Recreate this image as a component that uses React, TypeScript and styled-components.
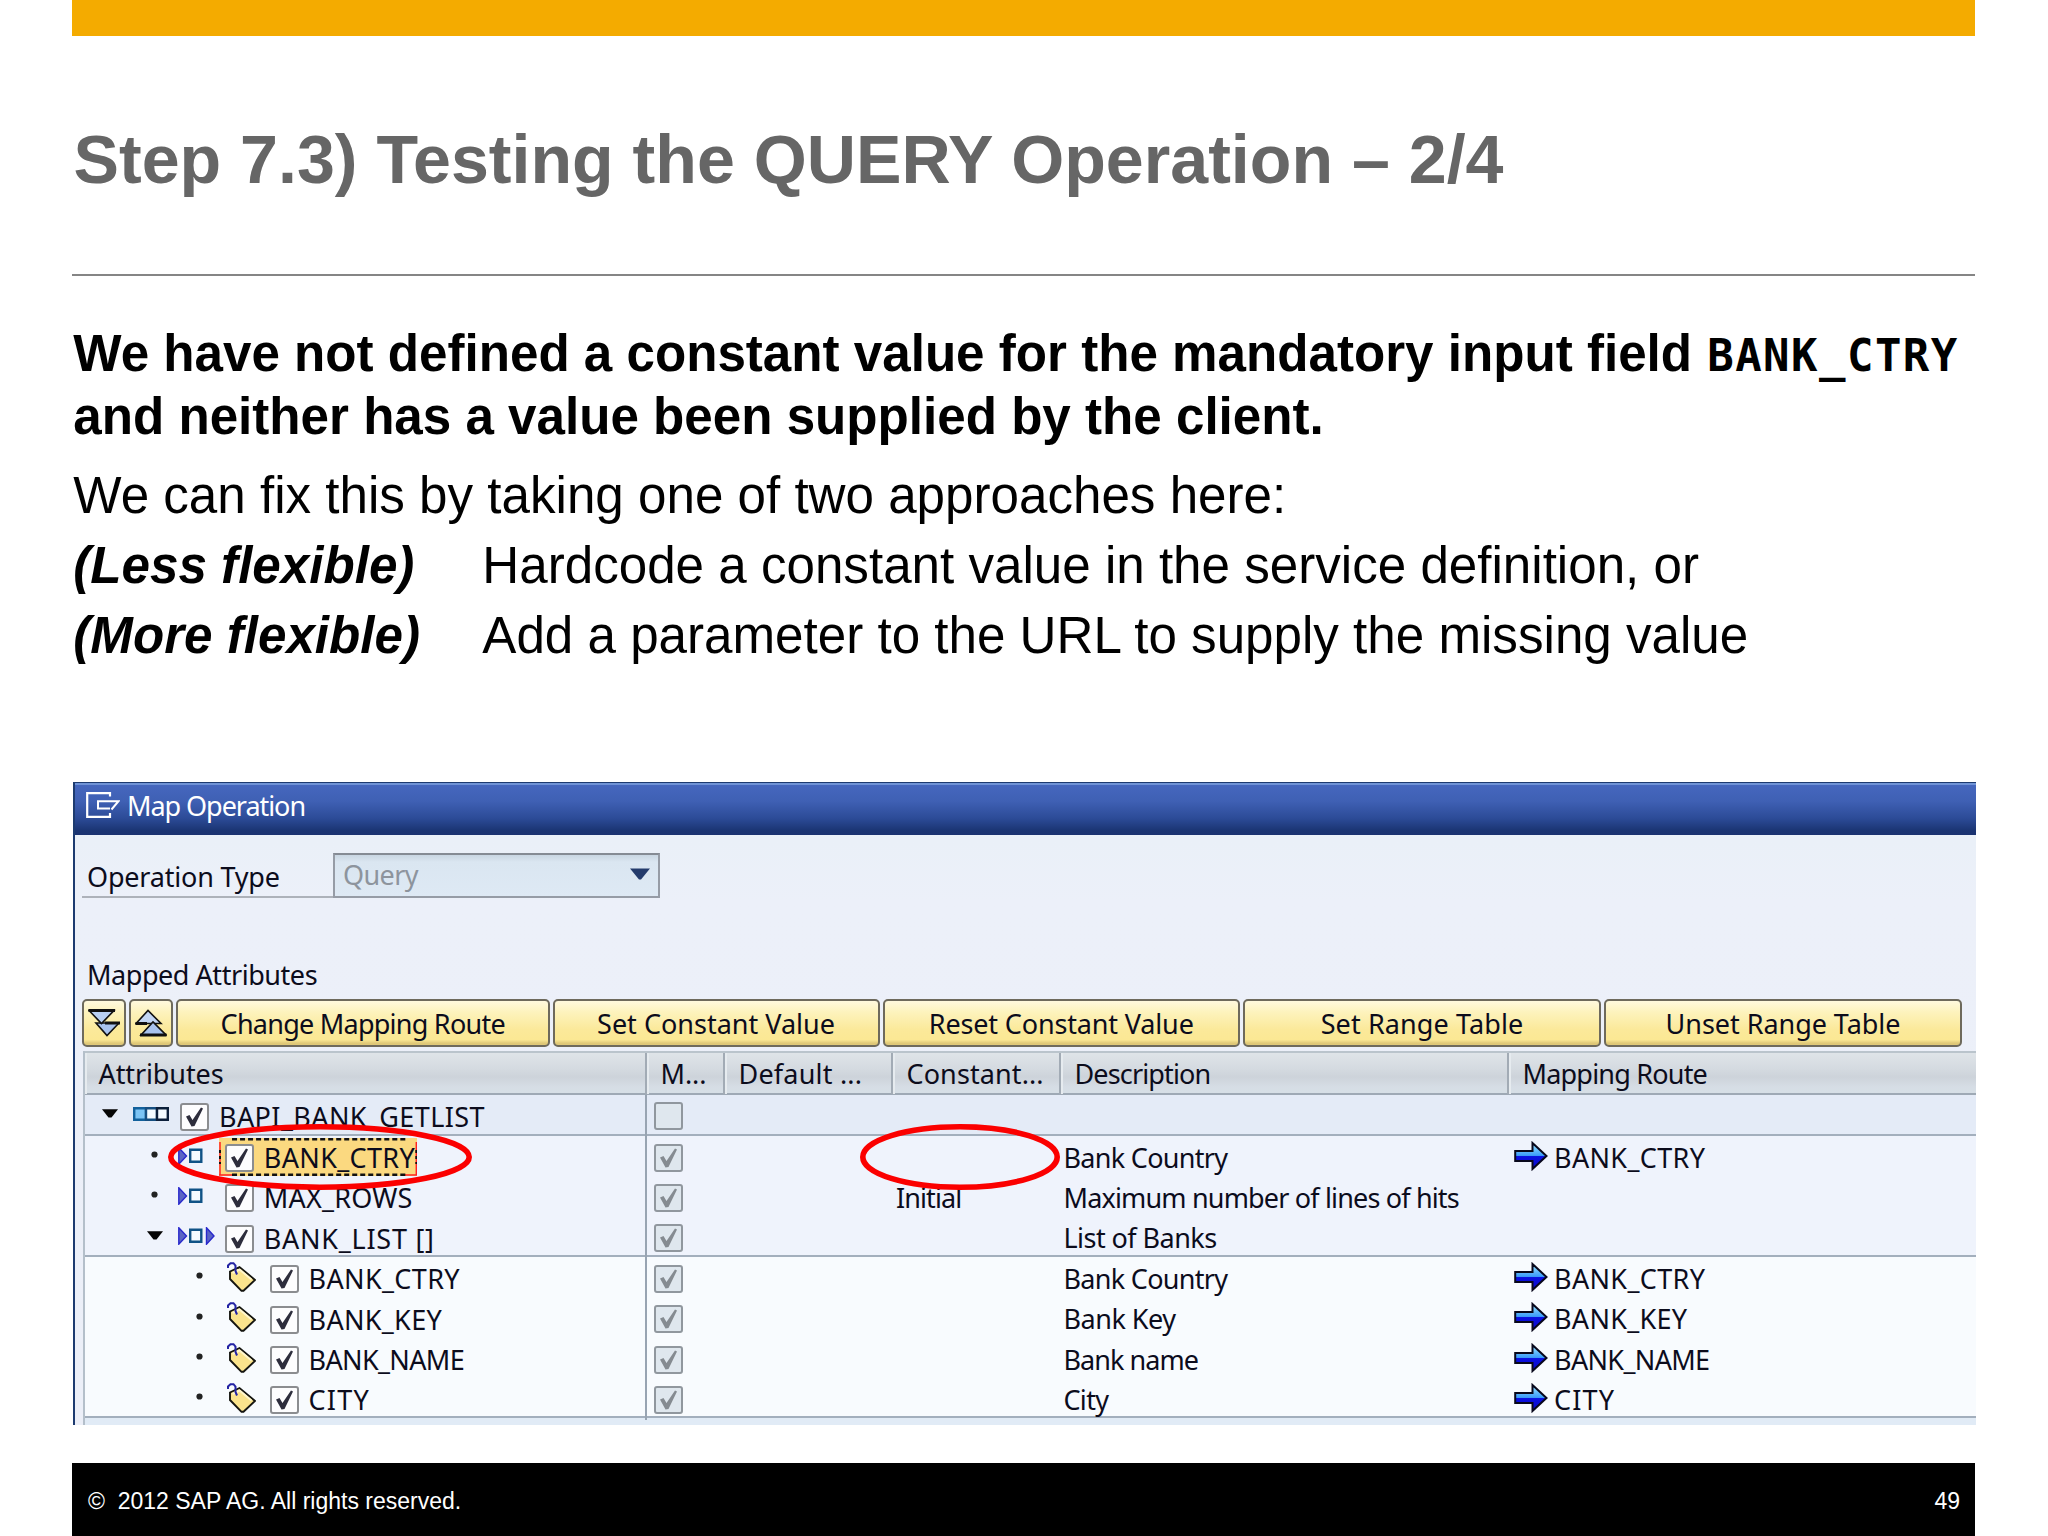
import React from "react";
import styled, { createGlobalStyle, css } from "styled-components";

const Global = createGlobalStyle`
  body { margin: 0; background: #fff; }
  * { box-sizing: border-box; }
`;

const Slide = styled.div`
  width: 2048px;
  height: 1536px;
  padding: 0 73px 0 72px;
  display: flex;
  flex-direction: column;
  overflow: hidden;
  background: #fff;
  color: #000;
  font-family: "Liberation Sans", Arial, sans-serif;
`;

const TopBar = styled.div`
  flex: none;
  height: 36px;
  background: #f4ab00;
`;

const Title = styled.h1`
  flex: none;
  margin: 0;
  height: 240px;
  padding: 83px 0 0 1.5px;
  border-bottom: 2px solid #858585;
  font-size: 68.15px;
  line-height: 80px;
  font-weight: bold;
  color: #666;
  white-space: nowrap;
`;

const Body = styled.div`
  flex: none;
  height: 505.6px;
  padding: 47px 0 0 1.3px;
  font-size: 51.15px;
  white-space: nowrap;
`;

const Lead = styled.p`
  margin: 0 0 12px;
  font-weight: bold;
  line-height: 62.8px;
`;

const Code = styled.code`
  margin-left: 1px;
  font: bold 44px/1 "DejaVu Sans Mono", monospace;
  letter-spacing: 1.45px;
`;

const Line = styled.p`
  margin: 0;
  display: grid;
  grid-template-columns: 409px auto;
  line-height: 70px;
`;

const Full = styled.span`
  grid-column: 1 / -1;
`;

const Term = styled.em`
  font-weight: bold;
`;

const Panel = styled.section`
  position: relative;
  flex: none;
  width: 1903px;
  height: 643px;
  margin-left: 1px;
  border-left: 2px solid #1d3b70;
  display: flex;
  flex-direction: column;
  overflow: hidden;
  background: linear-gradient(#e8f0f7, #ecf0f9 120px, #eceff8);
  font-family: "Noto Sans", "Open Sans", sans-serif;
  font-size: 27px;
  line-height: 40px;
  color: #0c0c1c;
`;

const Text = styled.span<{ $ls?: number }>`
  padding-top: 2px;
  white-space: pre;
  letter-spacing: ${(p) => p.$ls ?? 0}px;
`;

const Caption = styled.header`
  flex: none;
  height: 53px;
  padding: 0 0 8px 11px;
  display: flex;
  align-items: center;
  gap: 7px;
  color: #fff;
  border-top: 1px solid #1d3b70;
  box-shadow: inset 0 2px 0 #6f93d6;
  background: linear-gradient(#4668bf, #3f60b4 35%, #2c4b97 68%, #1a3472 92%, #1a3270);
`;

const Form = styled.div`
  flex: none;
  height: 63.5px;
  padding: 18.5px 0 0 7px;
  display: flex;
`;

const FieldLabel = styled.div`
  width: 251px;
  height: 45px;
  padding: 3.5px 0 0 5px;
  border-bottom: 2px solid #adb2ba;
`;

const Select = styled.div`
  width: 327px;
  height: 45px;
  padding: 0 8px 4px;
  display: flex;
  justify-content: space-between;
  align-items: center;
  border: 2px solid #969ca6;
  border-top-color: #858b94;
  background: linear-gradient(#c9d6e2, #dae6f1 7px, #dee9f4);
  color: #8d949d;
`;

const SectionLabel = styled.div`
  flex: none;
  height: 101px;
  padding: 57px 0 0 12px;
`;

const Toolbar = styled.div`
  flex: none;
  height: 52px;
  padding: 0 0 0 7px;
  display: flex;
  gap: 3px;
`;

const Button = styled.button<{ $w: number }>`
  flex: none;
  width: ${(p) => p.$w}px;
  height: 48px;
  padding: 0 0 1px;
  display: flex;
  justify-content: center;
  align-items: center;
  border: 2px solid #6e6a5c;
  border-radius: 5px;
  background: linear-gradient(#fff9de, #fdf3bd 25%, #fbe99a 65%, #fbe894 88%, #dfc878 96%);
  font: inherit;
  color: inherit;
`;

const columns = "562px 78px 168px 168px 448px 1fr";

const Table = styled.div`
  flex: 1;
  margin-left: 8px;
  display: flex;
  flex-direction: column;
  border-left: 2px solid #b4bfca;
  background: #e1ebf6;
`;

const Head = styled.div`
  flex: none;
  height: 44.1px;
  display: grid;
  grid-template-columns: ${columns};
  border-top: 2px solid #bac4cc;
  border-bottom: 2px solid #9ea9b5;
  background: linear-gradient(#dfe4e8, #d4dae0 40%, #cdd3da 60%, #d6dde5 85%, #d6dfe6);
`;

const HeadCell = styled.div<{ $last?: boolean }>`
  padding: 0 0 0 13.5px;
  line-height: 41px;
  white-space: nowrap;
  border-right: ${(p) => (p.$last ? "0" : "2px solid #a2abb5")};
  box-shadow: inset 2px 0 0 #e6ebef;
`;

const tones = { root: "#e4ebf7", mid: "#eff3fc", leaf: "#f8fbfe" };

const Row = styled.div<{ $tone: keyof typeof tones; $line?: boolean }>`
  flex: none;
  height: 40.4px;
  display: grid;
  grid-template-columns: ${columns};
  background: ${(p) => tones[p.$tone]};
  ${(p) => p.$line && css`box-shadow: inset 0 -2px 0 #a3afbd;`}
`;

const Cell = styled.div<{ $pad?: number }>`
  min-width: 0;
  padding-left: ${(p) => p.$pad ?? 3}px;
  display: flex;
  align-items: center;
`;

const TreeCell = styled(Cell)<{ $level: number }>`
  padding-left: ${(p) => 12 + p.$level * 44.8}px;
  border-right: 2px solid #98a4b2;
`;

const Marker = styled.span`
  flex: none;
  width: 26px;
  display: flex;
  justify-content: center;
  padding-bottom: 4px;
`;

const KindIcon = styled.span<{ $shift?: number }>`
  flex: none;
  width: 51px;
  padding: 0 0 2px ${(p) => 10 + (p.$shift ?? 0)}px;
  display: flex;
`;

const Item = styled.span<{ $on?: boolean }>`
  position: relative;
  height: 38px;
  margin-top: 1px;
  padding: 0 2px 0 6px;
  display: flex;
  align-items: center;
  gap: 10px;
  background: ${(p) => (p.$on ? "#fbd980" : "none")};
`;

const Frame = styled.svg`
  position: absolute;
  inset: 0;
  width: 100%;
  height: 100%;
`;

const Box = styled.span<{ $off?: boolean }>`
  flex: none;
  width: 29px;
  height: 28px;
  margin-top: 2px;
  display: flex;
  align-items: center;
  justify-content: center;
  border: 2px solid ${(p) => (p.$off ? "#90979e" : "#8b8d90")};
  border-radius: 3px;
  background: ${(p) => (p.$off ? "#dfe7ee" : "#fdfdfe")};
`;

const Ring = styled.svg<{ $x: number; $w: number }>`
  position: absolute;
  left: ${(p) => p.$x}px;
  top: 342px;
  width: ${(p) => p.$w}px;
  height: 66px;
`;

const Footer = styled.footer`
  flex: none;
  height: 73px;
  margin-top: 38.5px;
  padding: 0 15px 0 16px;
  display: flex;
  justify-content: space-between;
  line-height: 76px;
  background: #000;
  color: #fff;
  font-size: 23px;
  white-space: pre;
`;

const RouteLink = styled.span`
  display: flex;
  align-items: center;
  gap: 6px;
  svg { margin-bottom: 2px; }
`;

const Check = ({ off }: { off?: boolean }) => (
  <svg width="19" height="22" viewBox="0 0 19 22">
    <path d="M1 10.5 L4.5 9 L7.5 14 L16 1.5 L18 2.5 L9.5 20 L6.5 20.5 Z" fill={off ? "#858b91" : "#2d2d3c"} />
  </svg>
);

const Checkbox = ({ off, empty }: { off?: boolean; empty?: boolean }) => (
  <Box $off={off}>{!empty && <Check off={off} />}</Box>
);

const WindowIcon = () => (
  <svg width="34" height="26" viewBox="0 0 34 26" fill="none" stroke="#fff">
    <path d="M24 4.5V1.2H1.2V24.8H24V21" strokeWidth="2.2" />
    <path d="M24 16.500H12V9.200H32.500L25.500 17.500" strokeWidth="2" />
  </svg>
);

const ExpandIcon = () => (
  <svg width="32" height="28" viewBox="0 0 32 28" stroke="#111" strokeWidth="1.6">
    <path d="M8 14H31L19 26.5Z" fill="#a9c3ee" />
    <path d="M1 1.5H26L13.5 14.5Z" fill="#b9d0f4" />
    <path d="M0.5 1.5H27M17 14H32" strokeWidth="3" />
  </svg>
);

const CollapseIcon = () => (
  <svg width="32" height="28" viewBox="0 0 32 28" stroke="#111" strokeWidth="1.6">
    <path d="M1 14.5L13 1.5L26 14.5Z" fill="#c3d6f4" />
    <path d="M6 26L18 13L31 26Z" fill="#a9c3ee" />
    <path d="M0.5 14.5H12M5 26H31.5" strokeWidth="3" />
  </svg>
);

const Triangle = () => (
  <svg width="16" height="9" viewBox="0 0 16 9">
    <path d="M0 0.3H16L9.5 8.5H6.500Z" fill="#050505" />
  </svg>
);

const Bullet = () => (
  <svg width="7" height="7" viewBox="0 0 7 7">
    <circle cx="3.5" cy="3.5" r="3.100" fill="#222" />
  </svg>
);

const StructureIcon = () => (
  <svg width="36" height="14" viewBox="0 0 36 14" fill="#f4fbff" strokeWidth="2.4">
    <path d="M1.2 1.2H13V12.8H1.2Z" fill="#7cc4f4" stroke="#12619c" />
    <path d="M13 1.2H24V12.8H13Z" stroke="#154e80" />
    <path d="M24 1.2H34.8V12.8H24Z" stroke="#0b1f3a" />
  </svg>
);

const ParamIcon = ({ both }: { both?: boolean }) => (
  <svg width="37" height="18" viewBox="0 0 37 18">
    <path d="M0.8 0.8L8.5 9L0.8 17.2Z" fill="#5a64c4" stroke="#2828cc" strokeWidth="1.4" />
    <path d="M12.2 2.7H23.300V14.800H12.2Z" fill="#f4fbff" stroke="#0f5286" strokeWidth="2.4" />
    {both && <path d="M28.5 0.8L36 9L28.5 17.2Z" fill="#5a64c4" stroke="#2828cc" strokeWidth="1.4" />}
  </svg>
);

const TagIcon = () => (
  <svg width="29" height="30" viewBox="0 0 29 30">
    <path d="M3 9.500L12.500 5L28 18L16.500 28.800H14.500L3 17Z" fill="#fae38c" stroke="#151510" strokeWidth="1.9" />
    <path d="M5.500 11L12.500 7.500L24.500 17.500" fill="none" stroke="#fff6cc" strokeWidth="2" />
    <path d="M1 6V3.500L3.500 1.200H6.500L8.500 3.500V9L10 12.500" fill="none" stroke="#2424a4" strokeWidth="2" />
  </svg>
);

const ArrowIcon = () => (
  <svg width="34" height="30" viewBox="0 0 34 30">
    <defs>
      <linearGradient id="blue" x1="0" y1="0" x2="0" y2="1">
        <stop offset="0.15" stopColor="#7fd0ff" />
        <stop offset="0.48" stopColor="#3c9cf8" />
        <stop offset="0.52" stopColor="#0b10e0" />
        <stop offset="1" stopColor="#0808c8" />
      </linearGradient>
    </defs>
    <path d="M1.2 10H18.5V2L32.5 15L18.5 28V20H1.2Z" fill="url(#blue)" stroke="#08081c" strokeWidth="2" />
  </svg>
);

const kinds = {
  structure: <StructureIcon />,
  input: <ParamIcon />,
  table: <ParamIcon both />,
  tag: <TagIcon />,
};

type Label = [string, number];
interface Node {
  level: number;
  kind: keyof typeof kinds;
  name: Label;
  open?: boolean;
  on?: boolean;
  line?: boolean;
  constant?: Label;
  desc?: Label;
  route?: Label;
}

const CTRY: Label = ["BANK_CTRY", 0.35];
const KEY: Label = ["BANK_KEY", 0.3];
const NAME: Label = ["BANK_NAME", -0.65];
const CITY: Label = ["CITY", 1.2];

const nodes: Node[] = [
  { level: 0, kind: "structure", name: ["BAPI_BANK_GETLIST", 0.4], open: true, line: true },
  { level: 1, kind: "input", name: CTRY, on: true, desc: ["Bank Country", -0.7], route: CTRY },
  { level: 1, kind: "input", name: ["MAX_ROWS", 0.2], constant: ["Initial", -0.9], desc: ["Maximum number of lines of hits", -0.83] },
  { level: 1, kind: "table", name: ["BANK_LIST []", 0.75], open: true, line: true, desc: ["List of Banks", -0.55] },
  { level: 2, kind: "tag", name: CTRY, desc: ["Bank Country", -0.7], route: CTRY },
  { level: 2, kind: "tag", name: KEY, desc: ["Bank Key", -0.5], route: KEY },
  { level: 2, kind: "tag", name: NAME, desc: ["Bank name", -0.95], route: NAME },
  { level: 2, kind: "tag", name: CITY, line: true, desc: ["City", -0.7], route: CITY },
];

const heads: Label[] = [
  ["Attributes", -0.1],
  ["M...", -0.1],
  ["Default ...", 0.2],
  ["Constant...", 0.1],
  ["Description", -0.85],
  ["Mapping Route", -0.8],
];

const buttons: [string, number, number][] = [
  ["Change Mapping Route", -0.75, 373.5],
  ["Set Constant Value", 0, 327],
  ["Reset Constant Value", -0.15, 357.5],
  ["Set Range Table", 0.1, 358],
  ["Unset Range Table", -0.05, 358],
];

const tone = (level: number): keyof typeof tones => (["root", "mid", "leaf"] as const)[level];

const T = ({ v }: { v?: Label }) => (v ? <Text $ls={v[1]}>{v[0]}</Text> : null);

const SelectionFrame = () => (
  <Frame viewBox="0 0 198 38" preserveAspectRatio="none" fill="none">
    <path d="M1 4V37M197 4V37M0 37H14M184 37H198" stroke="#f22" strokeWidth="1.5" />
    <path d="M13 1.2H186M13 36.8H186" stroke="#111" strokeWidth="2.4" strokeDasharray="5 3" />
    <path d="M1 12V26M197 12V26" stroke="#111" strokeWidth="2" strokeDasharray="3 3" />
  </Frame>
);

const TreeRow = ({ n }: { n: Node }) => (
  <Row $tone={tone(n.level)} $line={n.line}>
    <TreeCell $level={n.level}>
      <Marker>{n.open ? <Triangle /> : <Bullet />}</Marker>
      <KindIcon $shift={n.kind === "tag" ? 4 : 0}>{kinds[n.kind]}</KindIcon>
      <Item $on={n.on}>
        {n.on && <SelectionFrame />}
        <Checkbox />
        <T v={n.name} />
      </Item>
    </TreeCell>
    <Cell $pad={7}>
      <Checkbox off empty={n.level === 0} />
    </Cell>
    <Cell />
    <Cell>
      <T v={n.constant} />
    </Cell>
    <Cell $pad={2.5}>
      <T v={n.desc} />
    </Cell>
    <Cell $pad={5}>
      {n.route && (
        <RouteLink>
          <ArrowIcon />
          <T v={n.route} />
        </RouteLink>
      )}
    </Cell>
  </Row>
);

const Circle = ({ x, w }: { x: number; w: number }) => (
  <Ring $x={x} $w={w} viewBox={`0 0 ${w} 66`}>
    <ellipse cx={w / 2} cy="33" rx={w / 2 - 2.8} ry="30.2" fill="none" stroke="#fb0000" strokeWidth="5.6" />
  </Ring>
);

export default function App() {
  return (
    <Slide>
      <Global />
      <TopBar />
      <Title>Step 7.3) Testing the QUERY Operation – 2/4</Title>
      <Body>
        <Lead>
          We have not defined a constant value for the mandatory input field <Code>BANK_CTRY</Code>
          <br />
          and neither has a value been supplied by the client.
        </Lead>
        <Line>
          <Full>We can fix this by taking one of two approaches here:</Full>
        </Line>
        <Line>
          <Term>(Less flexible)</Term>
          <span>Hardcode a constant value in the service definition, or</span>
        </Line>
        <Line>
          <Term>(More flexible)</Term>
          <span>Add a parameter to the URL to supply the missing value</span>
        </Line>
      </Body>
      <Panel>
        <Caption>
          <WindowIcon />
          <Text $ls={-1.05}>Map Operation</Text>
        </Caption>
        <Form>
          <FieldLabel>
            <Text $ls={-0.2}>Operation Type</Text>
          </FieldLabel>
          <Select>
            <Text $ls={-0.6}>Query</Text>
            <svg width="20" height="12" viewBox="0 0 20 12">
              <path d="M0 0.5H20L11 11.5H9Z" fill="#243c6c" />
            </svg>
          </Select>
        </Form>
        <SectionLabel>
          <Text $ls={-0.45}>Mapped Attributes</Text>
        </SectionLabel>
        <Toolbar>
          <Button $w={44}>
            <ExpandIcon />
          </Button>
          <Button $w={44}>
            <CollapseIcon />
          </Button>
          {buttons.map(([name, ls, w]) => (
            <Button key={name} $w={w}>
              <Text $ls={ls}>{name}</Text>
            </Button>
          ))}
        </Toolbar>
        <Table>
          <Head>
            {heads.map((h, i) => (
              <HeadCell key={h[0]} $last={i === heads.length - 1}>
                <T v={h} />
              </HeadCell>
            ))}
          </Head>
          {nodes.map((n, i) => (
            <TreeRow key={i} n={n} />
          ))}
        </Table>
        <Circle x={92.5} w={304} />
        <Circle x={784.5} w={200} />
      </Panel>
      <Footer>
        <span>©  2012 SAP AG. All rights reserved.</span>
        <span>49</span>
      </Footer>
    </Slide>
  );
}
